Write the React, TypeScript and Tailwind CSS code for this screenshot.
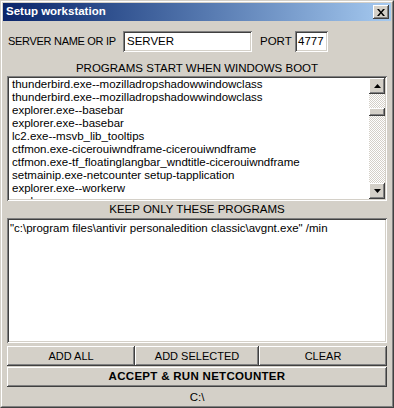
import React from 'react';

const sunken =
  'shadow-[inset_1px_1px_0_#808080,inset_-1px_-1px_0_#ffffff,inset_2px_2px_0_#404040,inset_-2px_-2px_0_#d4d0c8]';
const raised =
  'shadow-[inset_-1px_-1px_0_#404040,inset_1px_1px_0_#ffffff,inset_-2px_-2px_0_#808080,inset_2px_2px_0_#d4d0c8]';

const programs = [
  'thunderbird.exe--mozilladropshadowwindowclass',
  'thunderbird.exe--mozilladropshadowwindowclass',
  'explorer.exe--basebar',
  'explorer.exe--basebar',
  'lc2.exe--msvb_lib_tooltips',
  'ctfmon.exe-cicerouiwndframe-cicerouiwndframe',
  'ctfmon.exe-tf_floatinglangbar_wndtitle-cicerouiwndframe',
  'setmainip.exe-netcounter setup-tapplication',
  'explorer.exe--workerw',
  'explorer.exe--progman',
];

function Arrow({ down }: { down?: boolean }) {
  return (
    <div className={`w-4 h-4 shrink-0 bg-[#d4d0c8] ${raised} flex items-center justify-center`}>
      <svg width="7" height="4" viewBox="0 0 7 4">
        {down ? <polygon points="0,0 7,0 3.5,4" fill="#000" /> : <polygon points="0,4 7,4 3.5,0" fill="#000" />}
      </svg>
    </div>
  );
}

export default function App() {
  return (
    <div
      className="w-[394px] h-[408px] bg-[#d4d0c8] border border-t-[#d4d0c8] border-l-[#d4d0c8] border-r-[#404040] border-b-[#404040] text-black"
      style={{ fontFamily: '"Liberation Sans", Arial, sans-serif' }}
    >
      <div className="h-full border border-t-white border-l-white border-r-[#808080] border-b-[#808080] p-px flex flex-col">
        {/* title bar */}
        <div className="h-[18px] shrink-0 bg-gradient-to-r from-[#0a246a] to-[#a6caf0] flex items-center justify-between pl-[3px] pr-[2px]">
          <span className="text-white font-bold text-[11.5px] leading-none">Setup workstation</span>
          <div className={`w-4 h-[14px] bg-[#d4d0c8] ${raised} flex items-center justify-center`}>
            <svg width="8" height="7" viewBox="0 0 8 7">
              <path d="M0 0h2l2 2.5L6 0h2L5 3.5 8 7H6L4 4.5 2 7H0l3-3.5z" fill="#000" />
            </svg>
          </div>
        </div>

        <div className="flex-1 flex flex-col px-[4px]">
          {/* server row */}
          <div className="flex items-center h-[21px] mt-[10px] text-[11.5px] whitespace-nowrap">
            <span className="ml-px w-[115px] shrink-0 text-[11px] tracking-[-0.3px]">SERVER NAME OR IP</span>
            <div className={`w-[129px] h-[21px] shrink-0 bg-white ${sunken} flex items-center pl-[4px]`}>SERVER</div>
            <span className="ml-[8px] w-[35px] shrink-0">PORT</span>
            <div className={`w-[33px] h-[21px] shrink-0 bg-white ${sunken} flex items-center pl-[3px]`}>4777</div>
          </div>

          <div className="text-[11.5px] text-center h-[16px] leading-[16px] mt-[8px]">PROGRAMS START WHEN WINDOWS BOOT</div>

          {/* program list */}
          <div className={`h-[125px] shrink-0 bg-white ${sunken} p-[2px] flex`}>
            <div className="flex-1 overflow-hidden pl-[3px] text-[11.5px]">
              {programs.map((p, i) => (
                <div key={i} className="h-[13px] leading-[13px] whitespace-nowrap">
                  {p}
                </div>
              ))}
            </div>
            <div className="w-4 flex flex-col bg-[repeating-conic-gradient(#d4d0c8_0%_25%,#ffffff_0%_50%)] bg-[length:2px_2px]">
              <Arrow />
              <div className="h-[14px]" />
              <div className={`h-[8px] bg-[#d4d0c8] ${raised}`} />
              <div className="flex-1" />
              <Arrow down />
            </div>
          </div>

          <div className="text-[11.5px] text-center h-[17px] leading-[17px]">KEEP ONLY THESE PROGRAMS</div>

          {/* keep list */}
          <div className={`h-[125px] shrink-0 bg-white ${sunken} pl-[3px] pt-[4px] text-[11.5px]`}>
            <div className="h-[13px] leading-[13px] whitespace-nowrap">
              "c:\program files\antivir personaledition classic\avgnt.exe" /min
            </div>
          </div>

          {/* buttons */}
          <div className="grid grid-cols-[128px_124px_1fr] mt-[3px] h-[20px] text-[11px]">
            <button className={`${raised} bg-[#d4d0c8]`}>ADD ALL</button>
            <button className={`${raised} bg-[#d4d0c8]`}>ADD SELECTED</button>
            <button className={`${raised} bg-[#d4d0c8]`}>CLEAR</button>
          </div>
          <button className={`${raised} bg-[#d4d0c8] h-[20px] mt-px text-[11.5px] font-bold tracking-[0.3px]`}>
            ACCEPT &amp; RUN NETCOUNTER
          </button>
          <div className="text-[11.5px] text-center mt-[4px] leading-[13px]">C:\</div>
        </div>
      </div>
    </div>
  );
}
